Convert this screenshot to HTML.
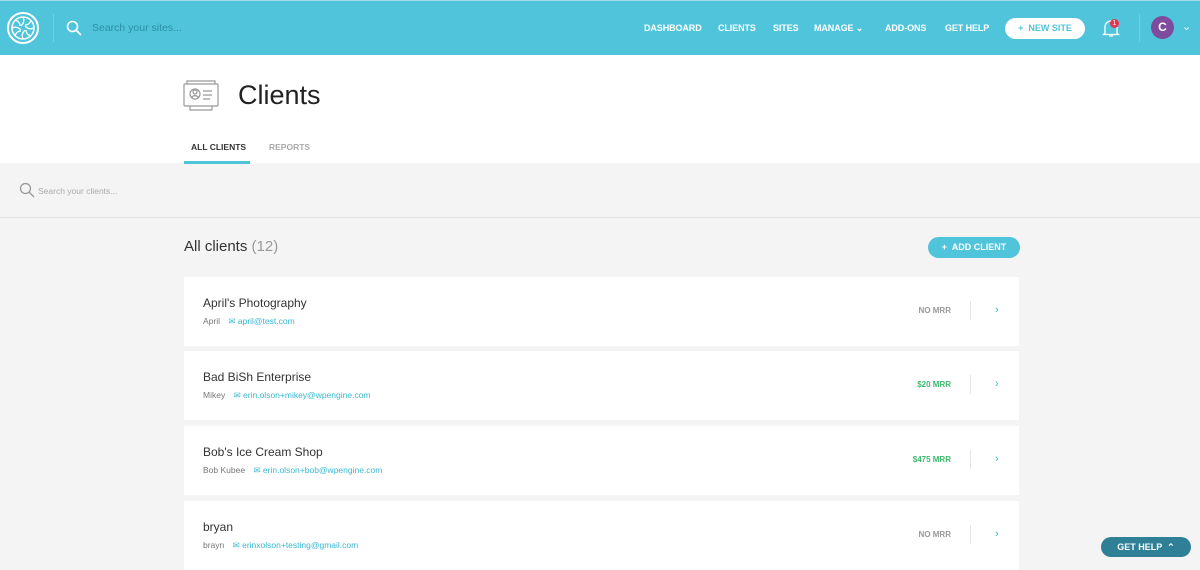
<!DOCTYPE html><html><head><style>
*{box-sizing:border-box;margin:0;padding:0}
body{width:1200px;height:565px;overflow:hidden;background:#f4f4f4;font-family:"Liberation Sans",sans-serif;position:relative}
.hd{position:absolute;left:0;top:0;width:1200px;height:55px;background:#50c4da;border-top:1px solid #a8dbe6}
.a{position:absolute}
.nav{font-size:9px;font-weight:bold;color:#fff;top:22px;letter-spacing:-0.1px}
.white{position:absolute;top:55px;left:0;width:1200px;height:108px;background:#fff}
.card{position:absolute;left:184px;width:835px;height:69px;background:#fff}
.card .n{position:absolute;left:19px;top:19px;font-size:12px;color:#333}
.card .s{position:absolute;left:19px;top:39px;font-size:8.5px;color:#777}
.card .s b{font-weight:normal;color:#3ab8d2;margin-left:6px}
.card .m{position:absolute;right:68px;top:29px;font-size:8px;font-weight:bold;color:#999}
.card .g{color:#3dba6e}
.card .dv{position:absolute;left:786px;top:24px;width:1px;height:19px;background:#e6e6e6}
.card .ch{position:absolute;left:811px;top:27px;font-size:11px;color:#3ab8d2}
</style></head><body>
<div class="hd">
<svg class="a" style="left:6px;top:10px" width="34" height="34" viewBox="0 0 34 34" fill="none" stroke="#fff" stroke-width="2"><circle cx="17" cy="17" r="15"/><circle cx="17" cy="17" r="11" stroke-width="1.5"/><path d="M17 6c2 4 0 7-2 9M28 17c-4 2-7 0-9-2M17 28c-2-4 0-7 2-9M6 17c4-2 7 0 9 2M9 9c4 1 5 4 5 6M25 9c-1 4-4 5-6 5M25 25c-4-1-5-4-5-6M9 25c1-4 4-5 6-5" stroke-width="1.3"/></svg>
<div class="a" style="left:53px;top:13px;width:1px;height:28px;background:#73cfe0"></div>
<svg class="a" style="left:66px;top:19px" width="16" height="16" viewBox="0 0 16 16" fill="none" stroke="#fff" stroke-width="1.6"><circle cx="6.5" cy="6.5" r="5"/><path d="M10 10l5 5"/></svg>
<div class="a" style="left:92px;top:21px;font-size:10.5px;color:#2d8fa5">Search your sites...</div>
<div class="a nav" style="left:644px">DASHBOARD</div>
<div class="a nav" style="left:718px">CLIENTS</div>
<div class="a nav" style="left:773px">SITES</div>
<div class="a nav" style="left:814px">MANAGE ⌄</div>
<div class="a nav" style="left:885px">ADD-ONS</div>
<div class="a nav" style="left:945px">GET HELP</div>
<div class="a" style="left:1005px;top:17px;width:80px;height:21px;border-radius:11px;background:#fff;color:#50c4da;font-size:9px;font-weight:bold;text-align:center;line-height:21px">+&nbsp; NEW SITE</div>
<svg class="a" style="left:1102px;top:17px" width="18" height="20" viewBox="0 0 18 20" fill="none" stroke="#fff" stroke-width="1.3"><path d="M3 15V9a6 6 0 0 1 12 0v6l1.5 1.5h-15z M7 18h4"/></svg>
<div class="a" style="left:1110px;top:18px;width:9px;height:9px;border-radius:50%;background:#e8344e;color:#fff;font-size:7px;text-align:center;line-height:9px">1</div>
<div class="a" style="left:1139px;top:13px;width:1px;height:28px;background:#73cfe0"></div>
<div class="a" style="left:1151px;top:15px;width:23px;height:23px;border-radius:50%;background:#7e4b9e;color:#fff;font-size:12px;font-weight:bold;text-align:center;line-height:23px">C</div>
<div class="a" style="left:1182px;top:19px;color:#fff;font-size:11px">⌄</div>
</div>
<div class="white"></div>
<svg class="a" style="left:183px;top:79px" width="37" height="33" viewBox="0 0 37 33" fill="none" stroke="#999" stroke-width="1.2"><rect x="1" y="5" width="34" height="22" rx="1"/><path d="M4 5V2h28v3M7 27v4h22v-4"/><circle cx="12" cy="15" r="5"/><circle cx="12" cy="13" r="2"/><path d="M8.5 18.5c2-2.5 5-2.5 7 0M20 12h9M20 16h9M20 20h7"/></svg>
<div class="a" style="left:238px;top:80px;font-size:27px;color:#222">Clients</div>
<div class="a" style="left:191px;top:142px;font-size:8.5px;font-weight:bold;color:#333">ALL CLIENTS</div>
<div class="a" style="left:269px;top:142px;font-size:8.5px;font-weight:bold;color:#aaa">REPORTS</div>
<div class="a" style="left:184px;top:161px;width:66px;height:3px;background:#50c4da"></div>
<div class="a" style="left:0;top:217px;width:1200px;height:1px;background:#e2e2e2"></div>
<svg class="a" style="left:19px;top:182px" width="16" height="16" viewBox="0 0 16 16" fill="none" stroke="#999" stroke-width="1.3"><circle cx="6.5" cy="6.5" r="5"/><path d="M10 10l5 5"/></svg>
<div class="a" style="left:38px;top:186px;font-size:8.5px;color:#aaa">Search your clients...</div>
<div class="a" style="left:184px;top:238px;font-size:15px;color:#333">All clients <span style="color:#999">(12)</span></div>
<div class="a" style="left:928px;top:237px;width:92px;height:21px;border-radius:11px;background:#50c4da;color:#fff;font-size:9px;font-weight:bold;text-align:center;line-height:21px">+&nbsp; ADD CLIENT</div>
<div class="card" style="top:277px"><div class="n">April's Photography</div><div class="s">April <b>✉ april@test.com</b></div><div class="m">NO MRR</div><div class="dv"></div><div class="ch">›</div></div>
<div class="card" style="top:351px"><div class="n">Bad BiSh Enterprise</div><div class="s">Mikey <b>✉ erin.olson+mikey@wpengine.com</b></div><div class="m g">$20 MRR</div><div class="dv"></div><div class="ch">›</div></div>
<div class="card" style="top:426px"><div class="n">Bob's Ice Cream Shop</div><div class="s">Bob Kubee <b>✉ erin.olson+bob@wpengine.com</b></div><div class="m g">$475 MRR</div><div class="dv"></div><div class="ch">›</div></div>
<div class="card" style="top:501px"><div class="n">bryan</div><div class="s">brayn <b>✉ erinxolson+testing@gmail.com</b></div><div class="m">NO MRR</div><div class="dv"></div><div class="ch">›</div></div>
<div class="a" style="left:1101px;top:537px;width:90px;height:20px;border-radius:10px;background:#2f8096;color:#fff;font-size:9px;font-weight:bold;text-align:center;line-height:20px">GET HELP &nbsp;⌃</div>
</body></html>
